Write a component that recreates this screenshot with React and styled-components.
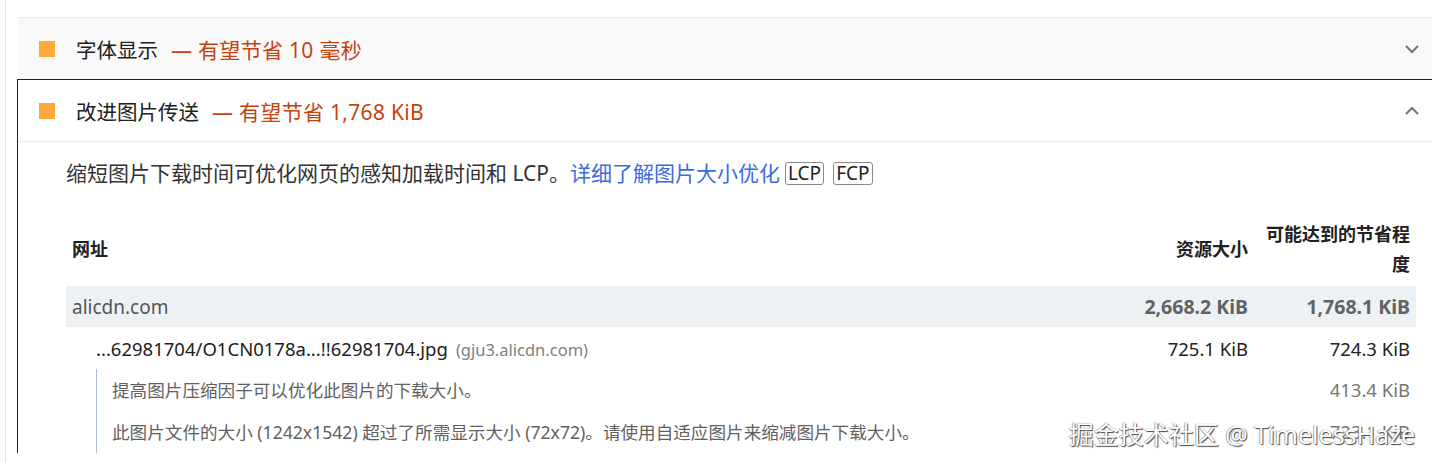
import React from 'react';
import styled, { createGlobalStyle } from 'styled-components';

const GlobalStyle = createGlobalStyle`
  html, body {
    margin: 0;
    padding: 0;
    background: #fff;
    overflow: hidden;
  }
  body {
    font-family: "Noto Sans", "Noto Sans CJK SC", sans-serif;
    color: #212121;
  }
`;

const Page = styled.div`
  position: relative;
  margin-left: 5px;
  border-left: 1px solid #e4e4e4;
  padding: 17px 0 0 11px;
  height: 463px;
  box-sizing: border-box;
`;

const Audit = styled.div`
  margin-right: -3px;
  border: 1px solid ${(p) => (p.$open ? '#202124' : 'transparent')};
  border-top-color: ${(p) => (p.$open ? '#202124' : '#ebebeb')};
  border-bottom: none;
  background: ${(p) => (p.$open ? '#fff' : '#f9f9f9')};
  ${(p) => !p.$open && 'margin-left: 1px; border-left: none;'}
`;

const Header = styled.div`
  display: flex;
  align-items: center;
  height: 61px;
  padding: 0 14px 0 21px;
  border-bottom: ${(p) => (p.$open ? '1px solid #ebebeb' : 'none')};
`;

const Square = styled.span`
  width: 16px;
  height: 16px;
  background: #ffa938;
  flex: none;
  margin-right: 21px;
`;

const Title = styled.span`
  font-size: 20.5px;
  color: #212121;
  white-space: nowrap;
`;

const Savings = styled.span`
  font-size: 21px;
  color: #c4420f;
  margin-left: 13px;
  letter-spacing: 0.3px;
  white-space: nowrap;
`;

const Chevron = styled.svg`
  margin-left: auto;
  width: 16px;
  height: 10px;
  flex: none;
`;

const Body = styled.div`
  padding: 18px 18px 0 48px;
`;

const Description = styled.div`
  font-size: 21px;
  line-height: 26px;
  color: #333;
  display: flex;
  align-items: center;
  white-space: nowrap;
`;

const Link = styled.a`
  color: #3a6be0;
  text-decoration: none;
  margin-right: 5px;
`;

const Badge = styled.span`
  display: inline-block;
  border: 1px solid #8a8a8a;
  border-radius: 3px;
  font-size: 19px;
  line-height: 21px;
  padding: 0 2px;
  color: #212121;
  margin-right: 9px;
`;

const Table = styled.table`
  width: 100%;
  margin-top: 27px;
  border-collapse: collapse;
  border-spacing: 0;
`;

const Th = styled.th`
  font-size: 18px;
  font-weight: 700;
  line-height: 30px;
  padding: 6px 6px 7px;
  text-align: ${(p) => (p.$num ? 'right' : 'left')};
  color: #212121;
  width: ${(p) => p.$w || 'auto'};
  vertical-align: middle;
`;

const GroupRow = styled.tr`
  background: #eef1f4;
`;

const Td = styled.td`
  padding: 0 6px 0 ${(p) => p.$indent || '6px'};
  height: ${(p) => p.$h || '41px'};
  text-align: ${(p) => (p.$num ? 'right' : 'left')};
  font-size: ${(p) => p.$size || '18.5px'};
  font-weight: ${(p) => (p.$bold ? 700 : 400)};
  color: ${(p) => p.$color || '#212121'};
  white-space: nowrap;
  vertical-align: middle;
`;

const Host = styled.span`
  font-size: 16.5px;
  color: #808080;
  margin-left: 8px;
`;

const SubItem = styled.div`
  border-left: 1px solid #aebdd6;
  padding-left: 15px;
  height: ${(p) => p.$h};
  display: flex;
  align-items: center;
  font-size: 17.6px;
  color: #616161;
  white-space: nowrap;
`;

const SubTd = styled.td`
  padding: 0 6px 0 30px;
  vertical-align: middle;
`;

const Watermark = styled.div`
  position: absolute;
  right: 17px;
  bottom: 12px;
  font-size: 25px;
  color: #fff;
  text-shadow: 1px 1px 1px #444, -0.5px -0.5px 1px #777;
  white-space: nowrap;
`;

const ChevronIcon = ({ up }) => (
  <Chevron viewBox="0 0 16 10">
    <polyline
      points={up ? '2,8 8,2 14,8' : '2,2 8,8 14,2'}
      fill="none"
      stroke="#757575"
      strokeWidth="2"
    />
  </Chevron>
);

export default function App() {
  return (
    <>
      <GlobalStyle />
      <Page>
        <Audit>
          <Header>
            <Square />
            <Title>字体显示</Title>
            <Savings>— 有望节省 10 毫秒</Savings>
            <ChevronIcon />
          </Header>
        </Audit>
        <Audit $open>
          <Header $open>
            <Square />
            <Title>改进图片传送</Title>
            <Savings>— 有望节省 1,768 KiB</Savings>
            <ChevronIcon up />
          </Header>
          <Body>
            <Description>
              缩短图片下载时间可优化网页的感知加载时间和 LCP。
              <Link href="#">详细了解图片大小优化</Link>
              <Badge>LCP</Badge>
              <Badge>FCP</Badge>
            </Description>
            <Table>
              <thead>
                <tr>
                  <Th>网址</Th>
                  <Th $num>资源大小</Th>
                  <Th $num $w="150px">可能达到的节省程度</Th>
                </tr>
              </thead>
              <tbody>
                <GroupRow>
                  <Td $size="19px" $color="#555">alicdn.com</Td>
                  <Td $num $bold $size="19.5px" $color="#5f6368">2,668.2 KiB</Td>
                  <Td $num $bold $size="19.5px" $color="#5f6368">1,768.1 KiB</Td>
                </GroupRow>
                <tr>
                  <Td $indent="30px" $h="42px">
                    ...62981704/O1CN0178a...!!62981704.jpg
                    <Host>(gju3.alicdn.com)</Host>
                  </Td>
                  <Td $num $h="42px">725.1 KiB</Td>
                  <Td $num $h="42px">724.3 KiB</Td>
                </tr>
                <tr>
                  <SubTd>
                    <SubItem $h="41px">提高图片压缩因子可以优化此图片的下载大小。</SubItem>
                  </SubTd>
                  <Td $h="41px" />
                  <Td $num $h="41px" $color="#757575">413.4 KiB</Td>
                </tr>
                <tr>
                  <SubTd>
                    <SubItem $h="43px">
                      此图片文件的大小 (1242x1542) 超过了所需显示大小 (72x72)。请使用自适应图片来缩减图片下载大小。
                    </SubItem>
                  </SubTd>
                  <Td $h="43px" />
                  <Td $num $h="43px" $color="#757575">723.1 KiB</Td>
                </tr>
              </tbody>
            </Table>
          </Body>
        </Audit>
        <Watermark>掘金技术社区 @ TimelessHaze</Watermark>
      </Page>
    </>
  );
}
